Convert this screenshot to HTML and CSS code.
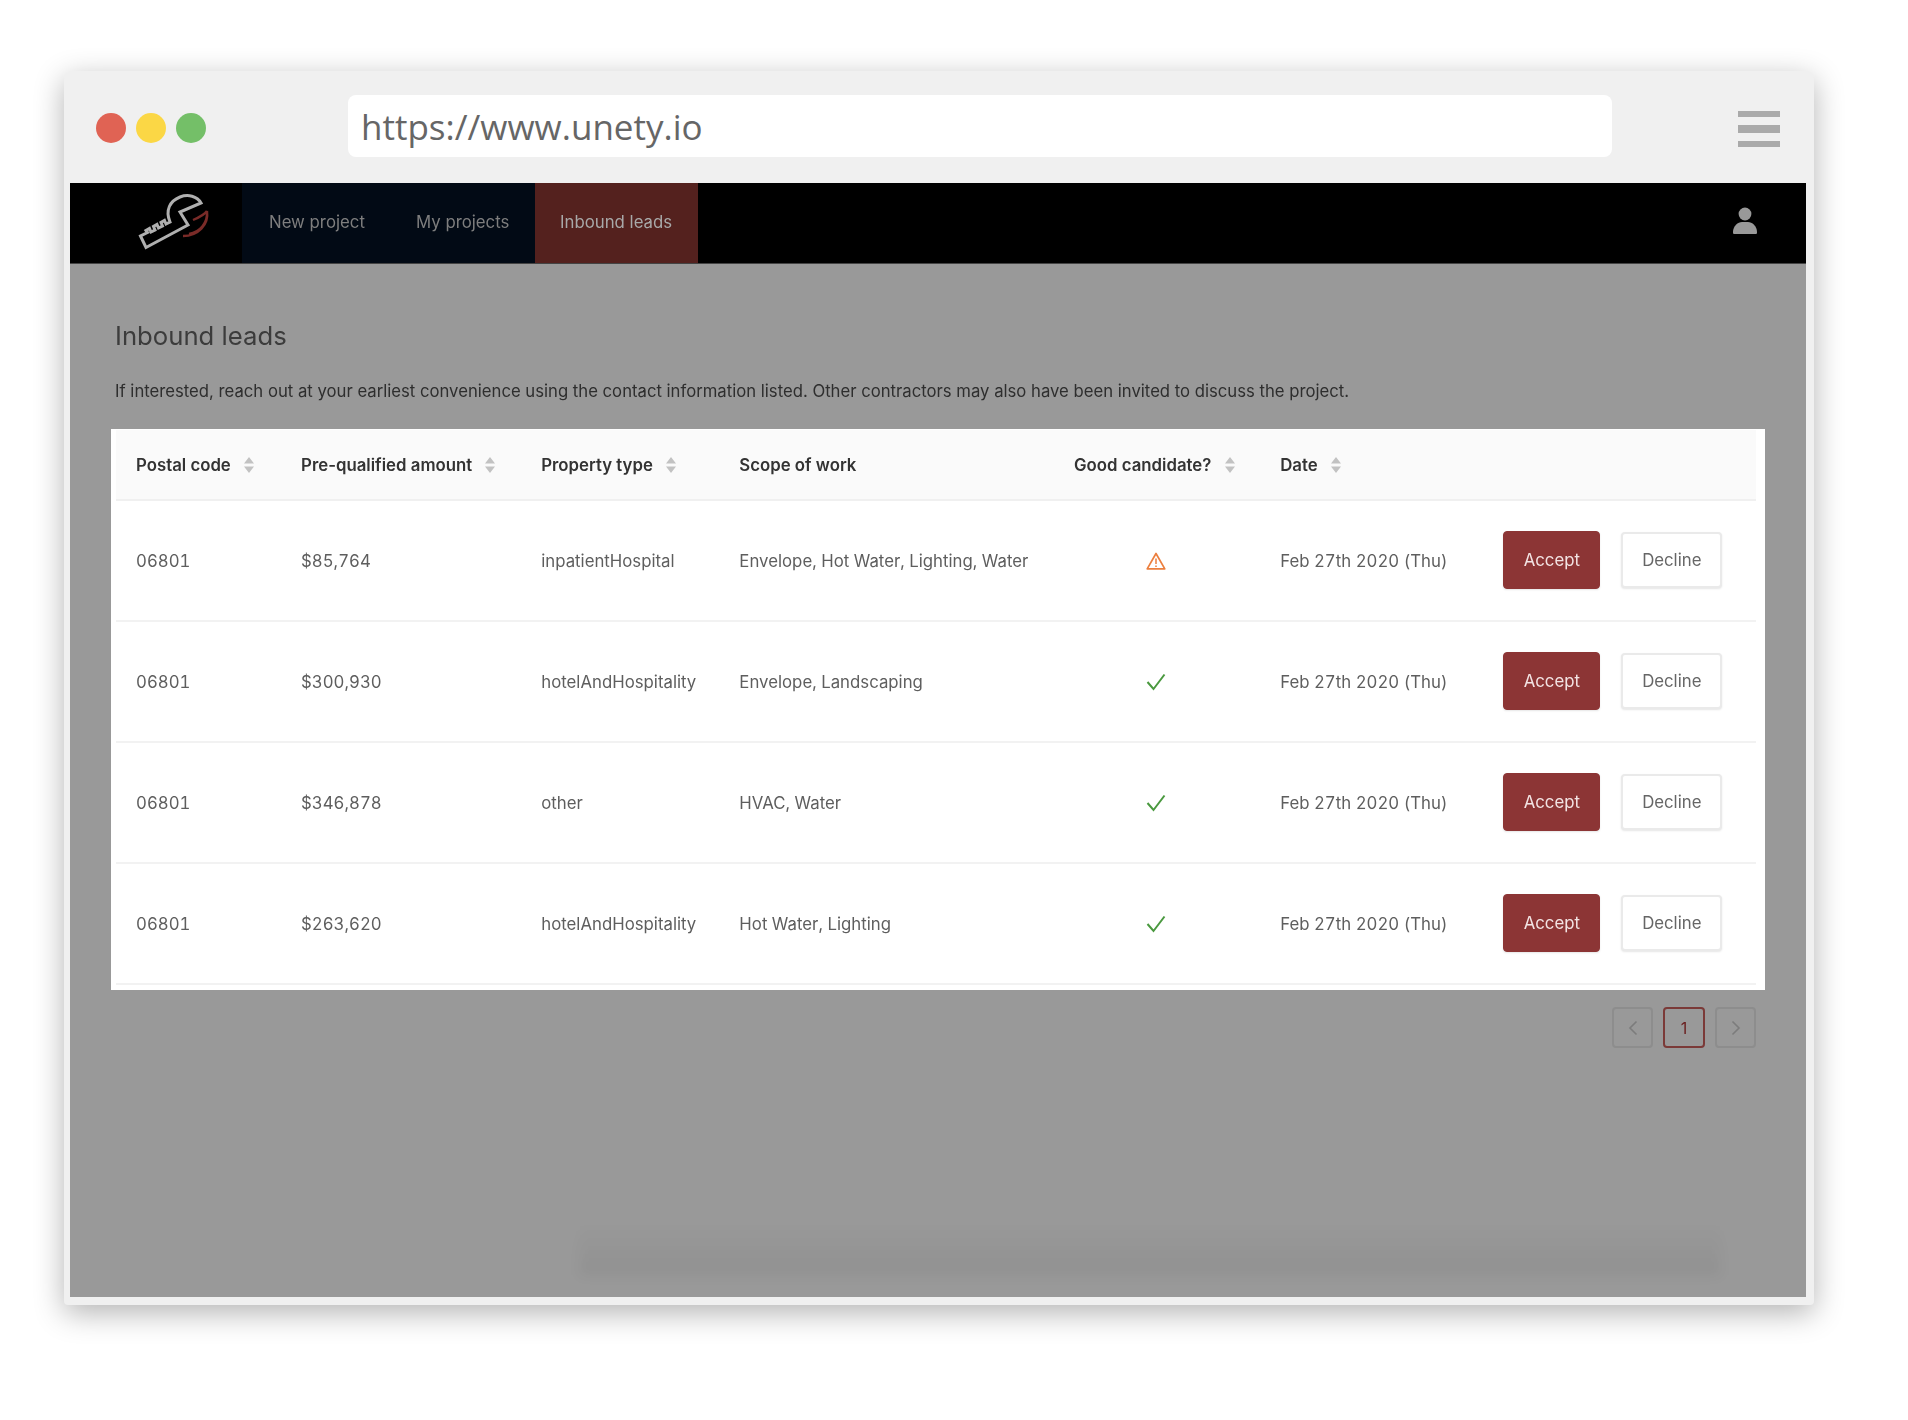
FILE: index.html
```html
<!DOCTYPE html>
<html>
<head>
    <title>Inbound leads</title>
    <link rel="stylesheet" href="styles.css">
</head>
<body>
    <div class="browser">
        <div class="browser-bar">
            <div class="dots">
                <span class="dot dot-red"></span>
                <span class="dot dot-yellow"></span>
                <span class="dot dot-green"></span>
            </div>
            <div class="url-box">https://www.unety.io</div>
            <div class="burger"><span class="line-thin"></span><span class="line-thick"></span><span class="line-thin"></span></div>
        </div>

        <div class="screen">
            <div class="nav">
                <div class="logo">
                    <svg width="110" height="80" viewBox="0 8 110 80">
                        <path d="M20.5 61 L26 72.5 L68 50 L60 37 L81 28 C77 21 68 19 60 22 C50 26 45 35 50 47 L46 49 L44.500 45.500 L41 47.500 L42.500 51 L38.500 53 L37 49.500 L33.500 51.500 L35 55 L31 57 L29.500 53.500 L26 55.500 L27.500 57.500 Z" fill="none" stroke="#b0b0b0" stroke-width="3" stroke-linejoin="miter"/>
                        <path d="M87 36 C89 50 78 61 63 61 M87 36 C85 39 80 42 73 45 M87 36 C88 48 80 57 69 59" fill="none" stroke="#7a2b28" stroke-width="2.4"/>
                    </svg>
                </div>
                <div class="nav-links">
                    <a class="nav-link link-new">New project</a>
                    <a class="nav-link link-mine">My projects</a>
                </div>
                <a class="nav-link nav-active">Inbound leads</a>
                <div class="nav-user">
                    <svg width="24" height="28" viewBox="0 0 24 28">
                        <circle cx="12" cy="7" r="6.4" fill="#999"/>
                        <path d="M1 27 C0 27 0 26 0 25 C0 19 5 15 9 15 L15 15 C19 15 24 19 24 25 C24 26 24 27 23 27 Z" fill="#999"/>
                    </svg>
                </div>
            </div>

            <div class="main">
                <h2 class="page-title">Inbound leads</h2>
                <p class="page-intro">If interested, reach out at your earliest convenience using the contact information listed. Other contractors may also have been invited to discuss the project.</p>

                <div class="table-card">
                    <table class="leads">
                        <thead>
                            <tr>
                                <th class="col-postal">Postal code <svg class="sort" width="10" height="16" viewBox="0 0 10 16"><path d="M5 0 L10 6.5 H0 Z M5 16 L0 9.5 H10 Z" fill="#c2c2c2"/></svg></th>
                                <th class="col-amount">Pre-qualified amount <svg class="sort" width="10" height="16" viewBox="0 0 10 16"><path d="M5 0 L10 6.5 H0 Z M5 16 L0 9.5 H10 Z" fill="#c2c2c2"/></svg></th>
                                <th class="col-type">Property type <svg class="sort" width="10" height="16" viewBox="0 0 10 16"><path d="M5 0 L10 6.5 H0 Z M5 16 L0 9.5 H10 Z" fill="#c2c2c2"/></svg></th>
                                <th class="col-scope">Scope of work</th>
                                <th class="col-good">Good candidate? <svg class="sort" width="10" height="16" viewBox="0 0 10 16"><path d="M5 0 L10 6.5 H0 Z M5 16 L0 9.5 H10 Z" fill="#c2c2c2"/></svg></th>
                                <th class="col-date">Date <svg class="sort" width="10" height="16" viewBox="0 0 10 16"><path d="M5 0 L10 6.5 H0 Z M5 16 L0 9.5 H10 Z" fill="#c2c2c2"/></svg></th>
                                <th class="col-actions"></th>
                            </tr>
                        </thead>
                        <tbody>
                            <tr>
                                <td>06801</td>
                                <td>$85,764</td>
                                <td>inpatientHospital</td>
                                <td>Envelope, Hot Water, Lighting, Water</td>
                                <td class="cell-status">
                                    <svg width="20" height="18" viewBox="0 0 20 18"><path d="M10 1.5 L18.800 16.800 H1.200 Z" fill="none" stroke="#ec7f3e" stroke-width="1.7" stroke-linejoin="round"/><path d="M10 6.500 V12 M10 13.400 V15" stroke="#ec7f3e" stroke-width="1.5"/></svg>
                                </td>
                                <td>Feb 27th 2020 (Thu)</td>
                                <td class="cell-actions"><button class="btn btn-accept">Accept</button><button class="btn btn-decline">Decline</button></td>
                            </tr>
                            <tr>
                                <td>06801</td>
                                <td>$300,930</td>
                                <td>hotelAndHospitality</td>
                                <td>Envelope, Landscaping</td>
                                <td class="cell-status">
                                    <svg width="20" height="18" viewBox="0 0 20 18"><path d="M1.5 9 L7.5 16 L18.5 1.5" fill="none" stroke="#4a993f" stroke-width="2"/></svg>
                                </td>
                                <td>Feb 27th 2020 (Thu)</td>
                                <td class="cell-actions"><button class="btn btn-accept">Accept</button><button class="btn btn-decline">Decline</button></td>
                            </tr>
                            <tr>
                                <td>06801</td>
                                <td>$346,878</td>
                                <td>other</td>
                                <td>HVAC, Water</td>
                                <td class="cell-status">
                                    <svg width="20" height="18" viewBox="0 0 20 18"><path d="M1.5 9 L7.5 16 L18.5 1.5" fill="none" stroke="#4a993f" stroke-width="2"/></svg>
                                </td>
                                <td>Feb 27th 2020 (Thu)</td>
                                <td class="cell-actions"><button class="btn btn-accept">Accept</button><button class="btn btn-decline">Decline</button></td>
                            </tr>
                            <tr>
                                <td>06801</td>
                                <td>$263,620</td>
                                <td>hotelAndHospitality</td>
                                <td>Hot Water, Lighting</td>
                                <td class="cell-status">
                                    <svg width="20" height="18" viewBox="0 0 20 18"><path d="M1.5 9 L7.5 16 L18.5 1.5" fill="none" stroke="#4a993f" stroke-width="2"/></svg>
                                </td>
                                <td>Feb 27th 2020 (Thu)</td>
                                <td class="cell-actions"><button class="btn btn-accept">Accept</button><button class="btn btn-decline">Decline</button></td>
                            </tr>
                        </tbody>
                    </table>
                </div>

                <div class="pagination">
                    <a class="page-item"><svg width="10" height="16" viewBox="0 0 10 16"><path d="M8.5 1.5 L2 8 L8.5 14.5" fill="none" stroke="#7c7c7c" stroke-width="1.6"/></svg></a>
                    <a class="page-item page-current">1</a>
                    <a class="page-item"><svg width="10" height="16" viewBox="0 0 10 16"><path d="M1.5 1.5 L8 8 L1.5 14.5" fill="none" stroke="#7c7c7c" stroke-width="1.6"/></svg></a>
                </div>

                <div class="bottom-shadow"></div>
            </div>
        </div>
    </div>
</body>
</html>
```

FILE: styles.css
```css
body {
    margin: 0;
    padding: 71px 0 115px 64px;
    background-color: #fff;
    font-family: Inter, "Liberation Sans", sans-serif;
}

/* Browser mockup frame */
.browser {
    width: 1750px;
    height: 1234px;
    box-sizing: border-box;
    padding: 0 8px 8px 6px;
    background-color: #f0f0f0;
    border-radius: 8px 8px 4px 4px;
    box-shadow: 0 8px 30px rgba(0, 0, 0, 0.3);
}

.browser-bar {
    height: 112px;
    display: flex;
    align-items: center;
}

.dots {
    display: flex;
    gap: 10px;
    margin: 2px 0 0 26px;
}

.dot {
    width: 30px;
    height: 30px;
    border-radius: 50%;
}

.dot-red { background-color: #e06354; }
.dot-yellow { background-color: #fbd745; }
.dot-green { background-color: #74bf68; }

.url-box {
    width: 1251px;
    height: 62px;
    margin: -2px 0 0 142px;
    padding-left: 13px;
    background-color: #fff;
    border-radius: 8px;
    color: #666;
    font-family: "Open Sans", sans-serif;
    font-size: 35px;
    line-height: 64px;
}

.burger {
    display: flex;
    flex-direction: column;
    gap: 8px;
    margin: 4px 0 0 126px;
}

.burger span {
    display: block;
    width: 42px;
    background-color: #aaa;
}

.line-thin { height: 6px; }
.line-thick { height: 8px; }

/* The app screenshot inside the frame, a little soft */
.screen {
    height: 1114px;
    background-color: #999;
    filter: blur(0.7px);
}

.nav {
    height: 80px;
    display: flex;
    background-color: #000;
    border-bottom: 1px solid #444;
}

.logo {
    width: 122px;
    padding-left: 50px;
}

.logo svg {
    display: block;
}

.nav-links {
    display: flex;
    background-color: #020a15;
}

.nav-link {
    display: block;
    box-sizing: border-box;
    font-size: 16.8px;
    line-height: 79px;
    color: #7e7e7e;
}

.link-new {
    width: 174px;
    padding-left: 27px;
}

.link-mine {
    width: 119px;
    padding-left: 0;
}

.nav-active {
    width: 163px;
    padding-left: 25px;
    background-color: #54211e;
    color: #a8a8a8;
}

.nav-user {
    margin-left: auto;
    padding: 24px 49px 0 0;
}

.main {
    position: relative;
    height: 1033px;
    box-sizing: border-box;
    padding: 57px 41px 0;
}

.page-title {
    margin: 0 0 0 4px;
    font-size: 25.7px;
    font-weight: 400;
    line-height: 30px;
    color: #3c3c3c;
}

.page-intro {
    margin: 29px 0 0 4px;
    font-size: 16.7px;
    line-height: 22px;
    color: #2e2e2e;
}

.table-card {
    height: 561px;
    box-sizing: border-box;
    margin-top: 27px;
    padding: 1px 9px 0 5px;
    background-color: #fff;
}

.leads {
    width: 1640px;
    table-layout: fixed;
    border-collapse: separate;
    border-spacing: 0;
    font-size: 16.8px;
    color: #5e5e5e;
}

.leads th {
    height: 69px;
    padding: 0 20px;
    background-color: #fafafa;
    border-bottom: 2px solid #f0f0f0;
    text-align: left;
    font-weight: 600;
    color: #333;
    white-space: nowrap;
}

.leads td {
    height: 119px;
    padding: 0 20px;
    border-bottom: 2px solid #f2f2f2;
    font-variant-numeric: tabular-nums;
    white-space: nowrap;
}

.col-postal { width: 125px; }
.col-amount { width: 200px; }
.col-type { width: 158px; }
.col-scope { width: 294.5px; }
.col-good { width: 166px; }
.col-date { width: 183px; }
.col-actions { width: 232.5px; }

.sort {
    margin-left: 9px;
    vertical-align: -2px;
}

.leads .cell-status {
    padding-right: 22px;
}

.cell-status svg {
    display: block;
    margin: 0 auto;
}

.leads .cell-actions {
    height: 117px;
    padding-bottom: 2px;
}

.btn {
    box-sizing: border-box;
    border-radius: 4px;
    font-family: inherit;
    font-size: 16.8px;
    vertical-align: middle;
    box-shadow: 0 1px 2px rgba(0, 0, 0, 0.1);
}

.btn-accept {
    width: 97px;
    height: 58px;
    border: 1px solid #8c3535;
    background-color: #8c3535;
    color: #f3e4e4;
}

.btn-decline {
    width: 101px;
    height: 56px;
    margin-left: 21px;
    border: 2px solid #eaeaea;
    background-color: #fff;
    color: #666;
}

.pagination {
    display: flex;
    justify-content: flex-end;
    gap: 10px;
    margin: 17px 9px 0 0;
}

.page-item {
    width: 41px;
    height: 41px;
    box-sizing: border-box;
    display: flex;
    align-items: center;
    justify-content: center;
    border: 2px solid #8d8d8d;
    border-radius: 4px;
    font-size: 16px;
}

.page-current {
    width: 42px;
    border-color: #7b3a38;
    color: #6b2020;
}

.bottom-shadow {
    position: absolute;
    left: 510px;
    bottom: 22px;
    width: 1140px;
    height: 50px;
    background: linear-gradient(rgba(0, 0, 0, 0), rgba(0, 0, 0, 0.05));
    filter: blur(6px);
}
```
